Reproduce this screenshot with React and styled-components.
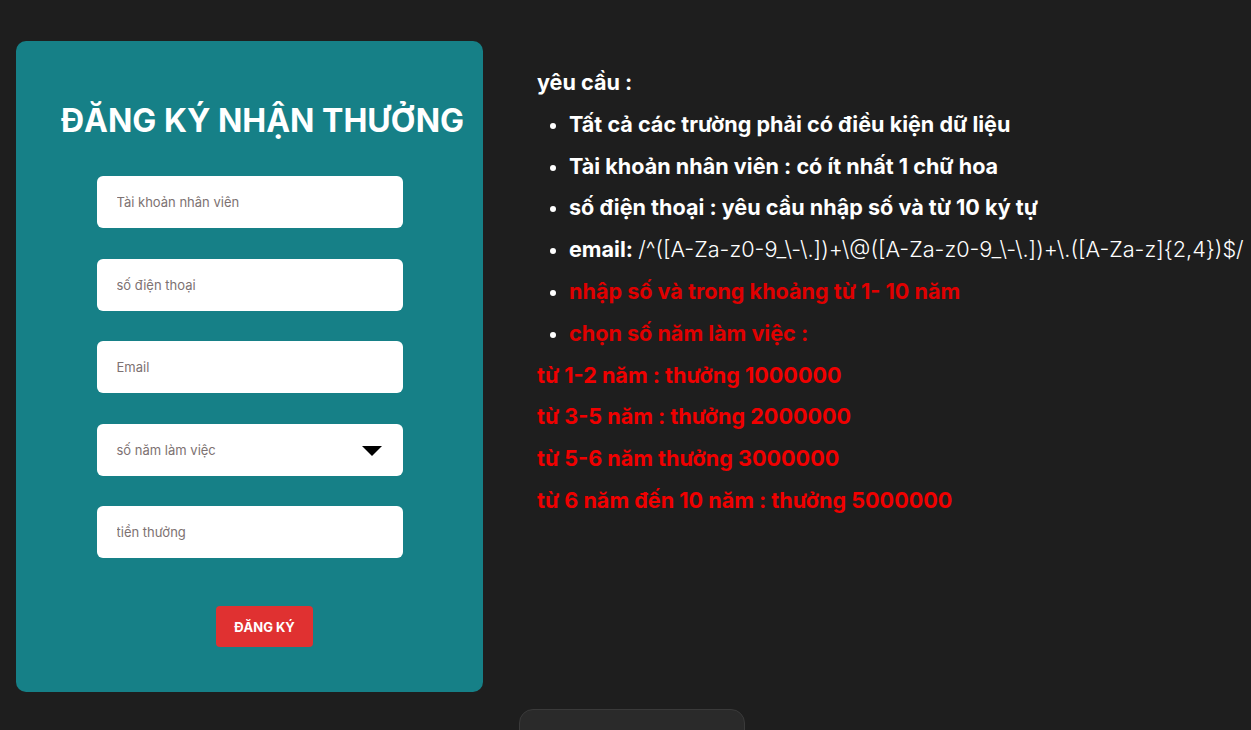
import React from 'react';
import styled, { createGlobalStyle } from 'styled-components';

const GlobalStyle = createGlobalStyle`
  html, body {
    margin: 0;
    padding: 0;
    background: #1e1e1e;
    font-family: Inter, "Noto Sans", sans-serif;
  }
`;

const Page = styled.div`
  display: flex;
  align-items: flex-start;
  gap: 54px;
  padding: 41px 0 0 16px;
  height: 730px;
  box-sizing: border-box;
  overflow: hidden;
  position: relative;
`;

const Card = styled.form`
  width: 467px;
  height: 651px;
  flex-shrink: 0;
  background: #168087;
  border-radius: 10px;
  display: flex;
  flex-direction: column;
  align-items: center;
  box-sizing: border-box;
  padding-top: 56px;
`;

const Title = styled.h1`
  margin: 0 0 31px 26px;
  color: #fff;
  font-size: 32px;
  font-weight: 700;
  line-height: 48px;
  white-space: nowrap;
`;

const Fields = styled.div`
  display: flex;
  flex-direction: column;
  gap: 30.5px;
  width: 306px;
`;

const Field = styled.div`
  position: relative;
  height: 52px;
  background: #fff;
  border-radius: 6px;
  display: flex;
  align-items: center;
  padding: 0 20px;
  box-sizing: border-box;
`;

const Input = styled.input`
  border: none;
  outline: none;
  background: transparent;
  width: 100%;
  font-family: Inter, "Noto Sans", sans-serif;
  font-size: 13px;
  color: #333;
  padding: 0;
  &::placeholder {
    color: #7d7272;
  }
`;

const SelectLabel = styled.span`
  flex: 1;
  font-size: 13px;
  color: #7d7272;
`;

const Caret = styled.span`
  width: 0;
  height: 0;
  border-left: 10px solid transparent;
  border-right: 10px solid transparent;
  border-top: 10px solid #000;
  margin-right: 1px;
  margin-top: 2px;
`;

const SubmitButton = styled.button`
  margin: 48px 0 0 30px;
  width: 97px;
  height: 41px;
  border: none;
  border-radius: 4px;
  background: #e03131;
  color: #fff;
  font-family: Inter, "Noto Sans", sans-serif;
  font-size: 13px;
  font-weight: 700;
  cursor: pointer;
`;

const Rules = styled.div`
  padding-top: 21px;
  color: #fff;
  font-size: 21.6px;
  font-weight: 700;
  line-height: 41.8px;
  white-space: nowrap;
`;

const Line = styled.div`
  color: ${p => p.$red ? '#f00000' : '#fff'};
`;

const List = styled.ul`
  margin: 0;
  padding-left: 32px;
  list-style: disc;
`;

const Item = styled.li`
  color: ${p => p.$red ? '#e00000' : '#fff'};
  &::marker {
    color: #fff;
    font-size: 20px;
  }
`;

const Regex = styled.span`
  font-weight: 300;
  font-size: 21.7px;
`;

const BottomBox = styled.div`
  position: absolute;
  left: 519px;
  top: 709px;
  width: 226px;
  height: 60px;
  background: #2a2a2a;
  border: 1px solid #3a3a3a;
  border-radius: 14px;
  box-sizing: border-box;
`;

const fields = [
  'Tài khoản nhân viên',
  'số điện thoại',
  'Email',
];

export default function App() {
  return (
    <>
      <GlobalStyle />
      <Page>
        <Card onSubmit={e => e.preventDefault()}>
          <Title>ĐĂNG KÝ NHẬN THƯỞNG</Title>
          <Fields>
            {fields.map(f => (
              <Field key={f}>
                <Input placeholder={f} />
              </Field>
            ))}
            <Field>
              <SelectLabel>số năm làm việc</SelectLabel>
              <Caret />
            </Field>
            <Field>
              <Input placeholder="tiền thưởng" />
            </Field>
          </Fields>
          <SubmitButton type="submit">ĐĂNG KÝ</SubmitButton>
        </Card>
        <Rules>
          <Line>yêu cầu :</Line>
          <List>
            <Item>Tất cả các trường phải có điều kiện dữ liệu</Item>
            <Item>Tài khoản nhân viên : có ít nhất 1 chữ hoa</Item>
            <Item>số điện thoại : yêu cầu nhập số và từ 10 ký tự</Item>
            <Item>email: <Regex>{'/^([A-Za-z0-9_\\-\\.])+\\@([A-Za-z0-9_\\-\\.])+\\.([A-Za-z]{2,4})$/'}</Regex></Item>
            <Item $red>nhập số và trong khoảng từ 1- 10 năm</Item>
            <Item $red>chọn số năm làm việc :</Item>
          </List>
          <Line $red>từ 1-2 năm : thưởng 1000000</Line>
          <Line $red>từ 3-5 năm : thưởng 2000000</Line>
          <Line $red>từ 5-6 năm thưởng 3000000</Line>
          <Line $red>từ 6 năm đến 10 năm : thưởng 5000000</Line>
        </Rules>
        <BottomBox />
      </Page>
    </>
  );
}
